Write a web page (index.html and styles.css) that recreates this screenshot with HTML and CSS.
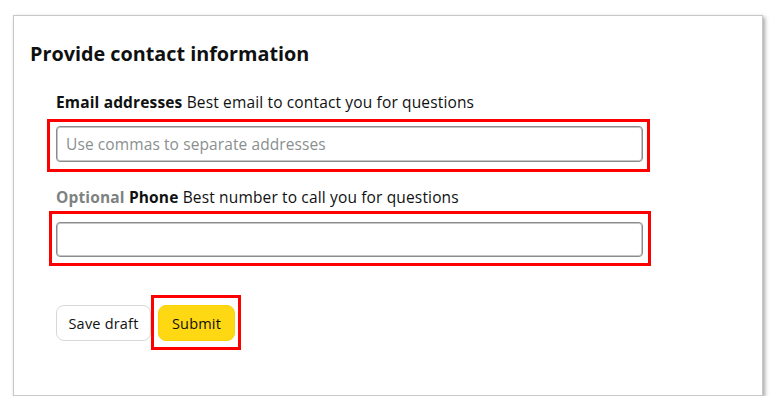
FILE: index.html
```html
<!DOCTYPE html>
<html lang="en">
<head>
<meta charset="utf-8">
<title>Provide contact information</title>
<link rel="stylesheet" href="styles.css">
</head>
<body>
<div class="card">
  <h1 class="title">Provide contact information</h1>
  <form class="form">
    <div class="field">
      <label class="label" for="email"><b>Email addresses</b> Best email to contact you for questions</label>
      <div class="mark mark-email">
        <input class="input" id="email" type="text" placeholder="Use commas to separate addresses">
      </div>
    </div>
    <div class="field field-phone">
      <label class="label" for="phone"><span class="optional">Optional</span> <b>Phone</b> Best number to call you for questions</label>
      <div class="mark mark-phone">
        <input class="input input-phone" id="phone" type="text">
      </div>
    </div>
    <div class="actions">
      <button class="btn btn-secondary" type="button">Save draft</button>
      <div class="mark mark-submit">
        <button class="btn btn-primary" type="button">Submit</button>
      </div>
    </div>
  </form>
</div>
</body>
</html>
```

FILE: styles.css
```css
* { box-sizing: border-box; }

html, body {
  margin: 0;
  padding: 0;
  background: #ffffff;
}

body {
  font-family: "Open Sans", "Noto Sans", Arial, sans-serif;
  color: #0f1111;
}

.card {
  margin: 15px 0 0 13px;
  width: 750px;
  height: 381px;
  background: #ffffff;
  border: 1px solid #c8c8c8;
  box-shadow: 2px 2px 4px rgba(0, 0, 0, 0.35);
  padding: 26px 0 0 16px;
}

.title {
  margin: 0;
  font-size: 19.8px;
  line-height: 24px;
  font-weight: 700;
  color: #0f1111;
}

.form {
  margin: 26px 0 0 26px;
  display: flex;
  flex-direction: column;
  width: 587px;
}

.label {
  display: block;
  font-size: 15.5px;
  letter-spacing: 0.15px;
  line-height: 20px;
  color: #0f1111;
}

.label b { font-weight: 700; }

.optional {
  color: #7d8282;
  font-weight: 700;
}

.mark {
  border: 3px solid #ff0000;
}

.mark-email {
  margin: 7px -7px 0 -9px;
  padding: 4px 4px 7px 6px;
}

.field-phone { margin-top: 15px; }

.mark-phone {
  margin: 4px -8px 0 -7px;
  padding: 8px 5px 6px 4px;
}

.input {
  display: block;
  width: 100%;
  height: 36px;
  border: 1px solid #888c8c;
  border-radius: 4px;
  box-shadow: inset 0 0 0 1px #c6c6c6;
  padding: 0 9px;
  font-family: inherit;
  font-size: 15.5px;
  letter-spacing: 0.1px;
  color: #0f1111;
  background: #ffffff;
}

.input-phone { height: 35px; }

.input::placeholder { color: #8a8f8f; }

.actions {
  margin-top: 29px;
  display: flex;
  align-items: flex-start;
}

.btn {
  height: 36px;
  border-radius: 8px;
  font-family: inherit;
  font-size: 14.5px;
  letter-spacing: 0.2px;
  padding: 0;
  color: #0f1111;
  cursor: pointer;
}

.btn-secondary {
  width: 95px;
  margin-top: 10px;
  background: #ffffff;
  border: 1px solid #d5d9d9;
}

.mark-submit {
  margin-left: 0;
  padding: 7px 3px 6px 4px;
}

.btn-primary {
  display: block;
  width: 77px;
  background: #ffd814;
  border: 1px solid #fcd200;
}
```
